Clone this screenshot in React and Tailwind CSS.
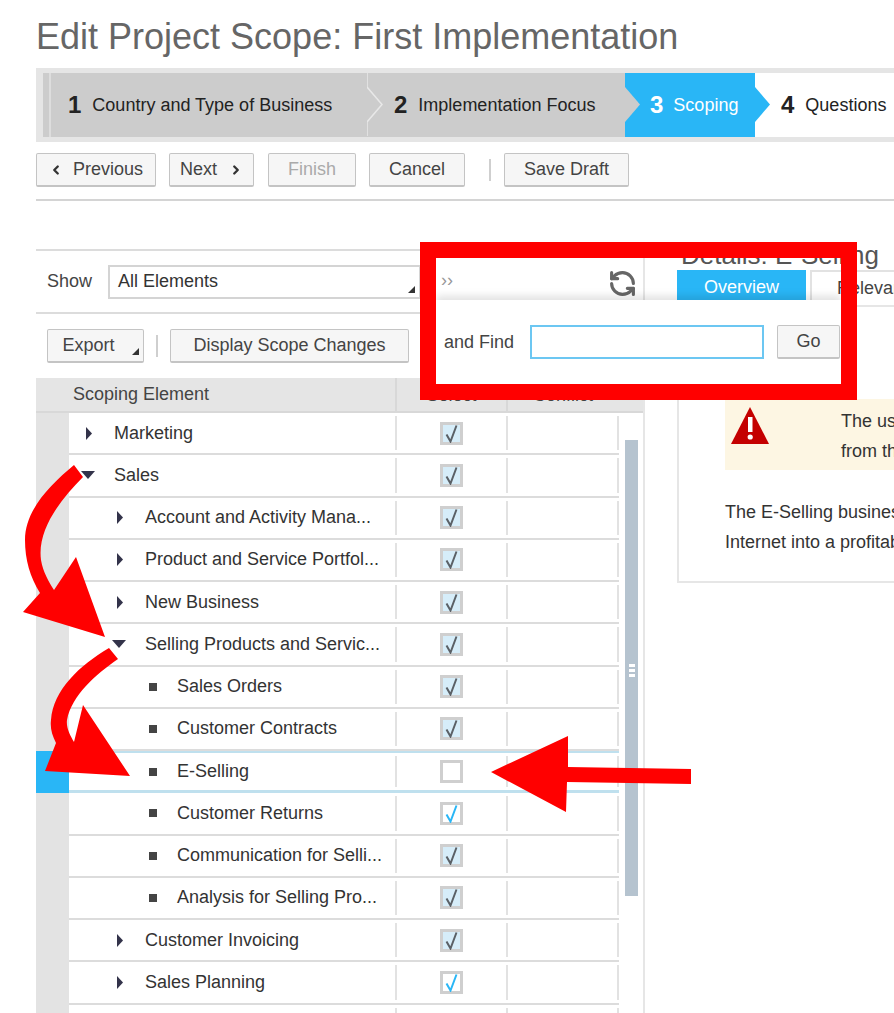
import { ChevronLeft, ChevronRight, RefreshCw } from 'lucide-react'

const rows = [
  { label: 'Marketing', kind: 'closed', pad: 'pl-[15px]', gap: 'w-[30px]' },
  { label: 'Sales', kind: 'open', pad: 'pl-[15px]', gap: 'w-[30px]' },
  { label: 'Account and Activity Mana...', kind: 'closed', pad: 'pl-[46px]', gap: 'w-[30px]' },
  { label: 'Product and Service Portfol...', kind: 'closed', pad: 'pl-[46px]', gap: 'w-[30px]' },
  { label: 'New Business', kind: 'closed', pad: 'pl-[46px]', gap: 'w-[30px]' },
  { label: 'Selling Products and Servic...', kind: 'open', pad: 'pl-[46px]', gap: 'w-[30px]' },
  { label: 'Sales Orders', kind: 'leaf', pad: 'pl-[80px]', gap: 'w-[28px]' },
  { label: 'Customer Contracts', kind: 'leaf', pad: 'pl-[80px]', gap: 'w-[28px]' },
  { label: 'E-Selling', kind: 'leaf', pad: 'pl-[80px]', gap: 'w-[28px]', check: 'none', active: true },
  { label: 'Customer Returns', kind: 'leaf', pad: 'pl-[80px]', gap: 'w-[28px]', check: 'blue' },
  { label: 'Communication for Selli...', kind: 'leaf', pad: 'pl-[80px]', gap: 'w-[28px]' },
  { label: 'Analysis for Selling Pro...', kind: 'leaf', pad: 'pl-[80px]', gap: 'w-[28px]' },
  { label: 'Customer Invoicing', kind: 'closed', pad: 'pl-[46px]', gap: 'w-[30px]' },
  { label: 'Sales Planning', kind: 'closed', pad: 'pl-[46px]', gap: 'w-[30px]', check: 'blue' },
  { label: '', kind: 'none', pad: 'pl-[46px]', gap: 'w-[30px]', check: 'none-hidden' },
]

function Button({ children, className = '' }) {
  return (
    <button className={`h-[34px] flex items-center justify-center border border-[#c4c4c4] border-b-2 rounded-[2px] bg-[#f6f6f6] text-[18px] text-[#444] ${className}`}>
      {children}
    </button>
  )
}

function RowIcon({ kind }) {
  if (kind === 'closed') {
    return (
      <svg width="8" height="15" viewBox="0 0 8 15" className="ml-[1px]">
        <path d="M1 1 L7 7.5 L1 14 Z" fill="#33334a" />
      </svg>
    )
  }
  if (kind === 'open') {
    return (
      <svg width="14" height="8" viewBox="0 0 14 8" className="-ml-[3px]">
        <path d="M0 0 H14 L7 8 Z" fill="#33334a" />
      </svg>
    )
  }
  if (kind === 'leaf') return <span className="block w-[8px] h-[8px] bg-[#444]" />
  return null
}

function Checkbox({ state }) {
  if (state === 'none-hidden') return null
  if (state === 'none') {
    return <span className="block w-[23px] h-[23px] border-[3px] border-[#cfcfcf] bg-white" />
  }
  const blue = state === 'blue'
  return (
    <span className={`flex items-center justify-center w-[23px] h-[23px] border-[3px] border-[#cfcfcf] ${blue ? 'bg-white' : 'bg-[#d6edf9]'}`}>
      <svg width="15" height="19" viewBox="0 0 15 19">
        <path d="M2.5 10.5 L6.5 17.5 L12.5 1.5" fill="none" stroke={blue ? '#29b6f6' : '#5a6066'} strokeWidth="2" />
      </svg>
    </span>
  )
}

function Row({ row }) {
  return (
    <div className={`flex h-[42.25px] shrink-0 ${row.active ? 'bg-[#bfe0ee]' : 'bg-[#dcdcdc]'}`}>
      <div className={`w-[33px] shrink-0 ${row.active ? 'bg-[#29b6f6]' : 'bg-[#e3e3e3]'}`} />
      <div className={`flex-1 flex ${row.active ? 'mt-[2px] mb-[3px]' : 'mb-[2px]'} bg-white`}>
        <div className={`w-[328px] shrink-0 my-[3px] flex items-center ${row.pad} border-r-2 border-[#e2e2e2] text-[18px] text-[#333] whitespace-nowrap overflow-hidden`}>
          <span className={`${row.gap} shrink-0 flex items-center`}>
            <RowIcon kind={row.kind} />
          </span>
          {row.label}
        </div>
        <div className="w-[111px] shrink-0 my-[3px] flex items-center justify-center border-r-2 border-[#e2e2e2]">
          <Checkbox state={row.check} />
        </div>
        <div className="flex-1 my-[3px] border-r-2 border-[#e2e2e2]" />
      </div>
    </div>
  )
}

export default function App() {
  return (
    <div className="relative w-[894px] h-[1013px] overflow-hidden bg-white font-['Liberation_Sans',Arial,sans-serif]">
      <div className="pl-[36px]">
        <h1 className="h-[68px] pt-[13px] text-[36px] leading-[48px] text-[#666] whitespace-nowrap">Edit Project Scope: First Implementation</h1>

        <div className="h-[74px] bg-[#e5e5e5] py-[5px] pl-[7px] flex">
          <div className="flex-1 flex bg-white text-[18px] whitespace-nowrap">
            <div className="w-[8px] bg-[#cccccc] border-r-2 border-[#dddddd]" />
            <div className="relative w-[317px] bg-[#cccccc] flex items-center pl-[17px] text-[#222]">
              <b className="text-[24px] mr-[11px] font-bold">1</b>Country and Type of Business
              <svg width="16" height="63" viewBox="0 0 16 63" className="absolute left-[316px] top-0 z-10">
                <path d="M0 0 V14 L15 31.5 L0 49 V63" fill="#cccccc" stroke="#e8e8e8" strokeWidth="1.5" />
              </svg>
            </div>
            <div className="relative w-[257px] bg-[#cccccc] flex items-center pl-[26px] text-[#222]">
              <b className="text-[24px] mr-[11px] font-bold">2</b>Implementation Focus
              <svg width="15" height="63" viewBox="0 0 15 63" className="absolute left-[257px] top-0 z-10">
                <path d="M0 14 L15 31.5 L0 49 Z" fill="#cccccc" />
              </svg>
            </div>
            <div className="relative w-[130px] bg-[#29b6f6] flex items-center pl-[25px] text-white">
              <b className="text-[24px] mr-[10px] font-bold">3</b>Scoping
              <svg width="15" height="63" viewBox="0 0 15 63" className="absolute left-[130px] top-0 z-10">
                <path d="M0 14 L15 31.5 L0 49 Z" fill="#29b6f6" />
              </svg>
            </div>
            <div className="flex items-center pl-[26px] text-[#222]">
              <b className="text-[24px] mr-[11px] font-bold">4</b>Questions
            </div>
          </div>
        </div>

        <div className="flex items-center h-[59px] border-b-2 border-[#d4d4d4] pb-[2px] pt-[1px]">
          <Button className="w-[120px] gap-[10px]"><ChevronLeft size={14} strokeWidth={4} color="#333" />Previous</Button>
          <Button className="w-[85px] ml-[13px] gap-[12px]">Next<ChevronRight size={14} strokeWidth={4} color="#333" /></Button>
          <Button className="w-[88px] ml-[14px] !text-[#aaa]">Finish</Button>
          <Button className="w-[96px] ml-[13px]">Cancel</Button>
          <span className="w-[2px] h-[22px] bg-[#cfcfcf] ml-[24px] mr-[13px]" />
          <Button className="w-[125px]">Save Draft</Button>
        </div>

        <div className="flex">
          <div className="w-[609px] shrink-0 mt-[48px] border-r-2 border-[#e6e6e6]">
            <div className="h-[65px] border-y-2 border-[#dcdcdc] flex items-center text-[18px] text-[#444]">
              <span className="ml-[11px] w-[61px]">Show</span>
              <div className="relative w-[313px] h-[34px] border-2 border-[#d4d4d4] flex items-center pl-[8px] text-[#333]">
                All Elements
                <span className="absolute right-[4px] bottom-[4px] w-0 h-0 border-l-[7px] border-l-transparent border-b-[7px] border-b-[#333]" />
              </div>
            </div>
            <div className="h-[64px] flex items-center pl-[11px]">
              <Button className="relative w-[97px] pr-[14px]">
                Export
                <span className="absolute right-[4px] bottom-[6px] w-0 h-0 border-l-[7px] border-l-transparent border-b-[7px] border-b-[#333]" />
              </Button>
              <span className="w-[2px] h-[22px] bg-[#cfcfcf] ml-[12px] mr-[12px]" />
              <Button className="w-[239px]">Display Scope Changes</Button>
            </div>
            <div className="h-[35px] bg-[#e5e5e5] border-b-2 border-[#d8d8d8] flex text-[18px] text-[#444]">
              <div className="w-[361px] pl-[37px] flex items-center border-r-2 border-[#d8d8d8]">Scoping Element</div>
              <div className="w-[111px] flex items-center justify-center border-r-2 border-[#d8d8d8] pt-[1px]">Select</div>
              <div className="flex-1 pl-[25px] flex items-center pt-[1px]">Conflict</div>
            </div>
            <div className="flex">
              <div className="w-[583px] shrink-0 flex flex-col">
                {rows.map((row) => (
                  <Row key={row.label || 'blank'} row={{ check: 'grey', ...row }} />
                ))}
              </div>
              <div className="flex-1 pl-[6px] pt-[27px]">
                <div className="w-[13px] h-[456px] bg-[#b5c3cf] flex flex-col items-center justify-center gap-[2px] pt-[4px]">
                  <span className="w-[6px] h-[3px] bg-white" />
                  <span className="w-[6px] h-[3px] bg-white" />
                  <span className="w-[6px] h-[3px] bg-white" />
                </div>
              </div>
            </div>
          </div>

          <div className="flex-1 pl-[32px] mt-[39px] whitespace-nowrap">
            <div className="h-[30px] text-[26px] leading-[30px] text-[#555] pl-[4px]">Details: E-Selling</div>
            <div className="flex h-[35px]">
              <div className="w-[129px] h-[35px] bg-[#29b6f6] text-white text-[18px] flex items-center justify-center">Overview</div>
              <div className="w-[100px] ml-[4px] border-2 border-[#e2e2e2] border-b-0 text-[18px] text-[#444] flex items-center pl-[25px]">Relevance</div>
            </div>
            <div className="h-[278px] border-l-2 border-t-2 border-b-2 border-[#e6e6e6] pt-[92px] pl-[46px]">
              <div className="h-[71px] bg-[#fdf6e3] flex pl-[6px] pt-[8px] text-[18px] text-[#333]">
                <svg width="38" height="37" viewBox="0 0 38 37" className="shrink-0">
                  <path d="M19 0 L38 37 H0 Z" fill="#c40000" />
                  <rect x="17" y="10" width="4.5" height="15" fill="#fff" />
                  <circle cx="19.2" cy="30" r="2.6" fill="#fff" />
                </svg>
                <div className="pl-[72px] leading-[30px] -mt-[1px]">
                  <div>The user</div>
                  <div>from the</div>
                </div>
              </div>
              <div className="mt-[27px] text-[18px] leading-[30px] text-[#333]">
                <div>The E-Selling business</div>
                <div>Internet into a profitable</div>
              </div>
            </div>
          </div>
        </div>
      </div>

      <div className="absolute left-[441px] top-[273px] text-[18px] leading-[14px] text-[#999]">››</div>
      <RefreshCw size={29} strokeWidth={2.6} color="#666" className="absolute left-[608px] top-[269px] -scale-x-100" />

      <div className="absolute left-[436px] top-[300px] w-[405px] h-[84px] bg-white shadow-[0_-4px_8px_rgba(0,0,0,0.12)] flex items-center text-[18px] text-[#444]">
        <span className="ml-[8px] w-[86px]">and Find</span>
        <div className="w-[234px] h-[34px] border-2 border-[#6cc7f2]" />
        <Button className="w-[63px] ml-[13px]">Go</Button>
      </div>
      <div className="absolute left-[420px] top-[242px] w-[437px] h-[158px] border-[16px] border-[#ff0000]" />

      <svg width="894" height="1013" viewBox="0 0 894 1013" className="absolute left-0 top-0">
        <path d="M74 465 L83 477 C60 500 37 530 41 560 C43 572 49 582 54 590 L76 557 L105 637 L23 612 L40 593 C30 577 25 560 25 540 C25 510 50 485 74 465 Z" fill="#ff0000" />
        <path d="M109 648 L118 659 C95 675 72 695 67 720 C66 728 70 735 74 742 L83 705 L130 776 L45 771 L56 743 C52 735 50 728 51 720 C53 690 80 665 109 648 Z" fill="#ff0000" />
        <path d="M491 772 L568 736 L568 767 L691 769 V784 L567 782 L566 812 Z" fill="#ff0000" />
      </svg>
    </div>
  )
}
